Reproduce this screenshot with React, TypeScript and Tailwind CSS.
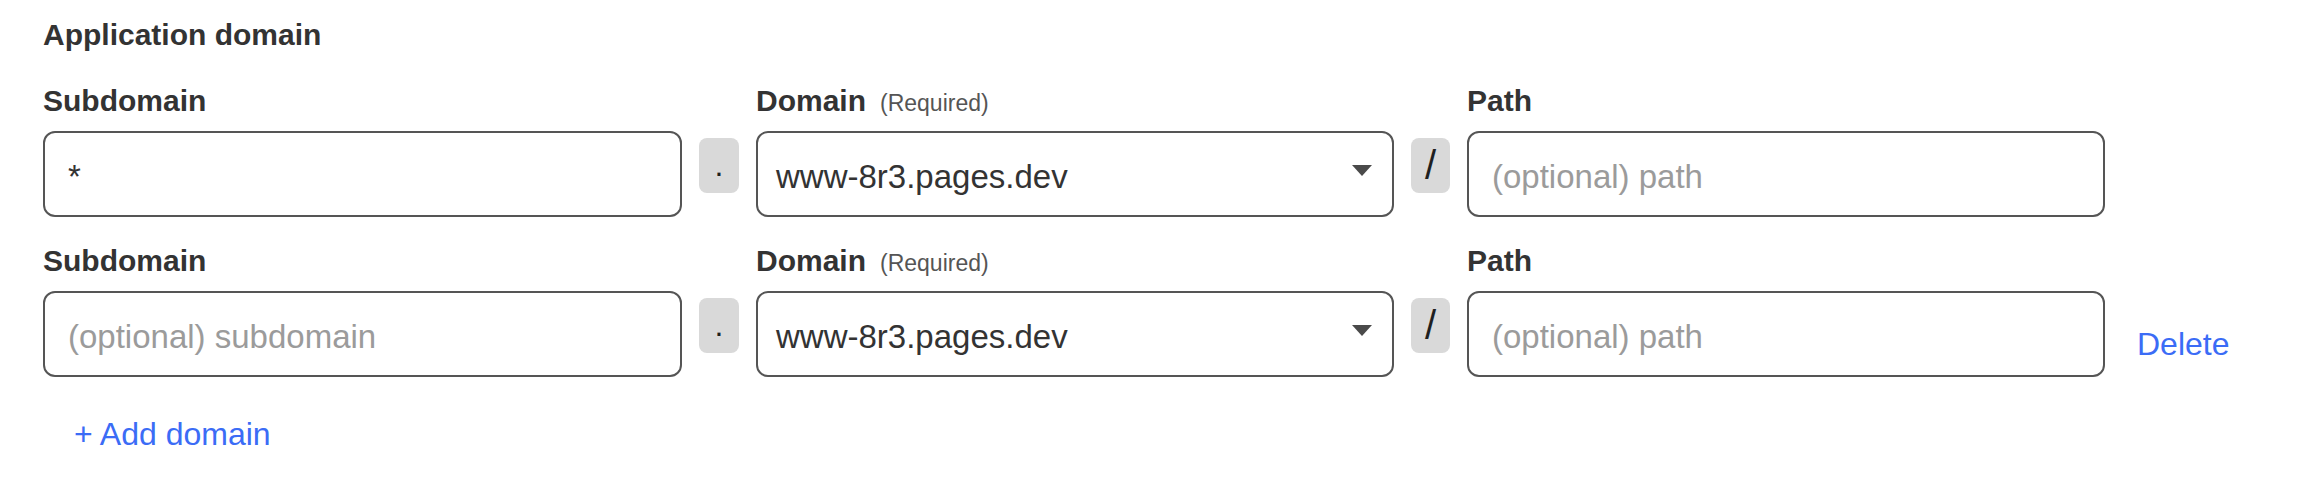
import React from "react";

type Row = { subdomain: string; showDelete: boolean };

const ROWS: Row[] = [
  { subdomain: "*", showDelete: false },
  { subdomain: "", showDelete: true },
];

const Separator = ({ char, big }: { char: string; big?: boolean }) => (
  <div
    className={
      "self-start mt-[7px] w-full h-[55px] rounded-[8px] bg-[#d9d9d9] flex justify-center text-[#1f1f1f] leading-[55px] " +
      (big ? "text-[40px]" : "text-[32px]")
    }
  >
    {char}
  </div>
);

const Label = ({ children }: { children: React.ReactNode }) => (
  <div className="flex items-baseline text-[30px] leading-[36px] font-bold text-[#333333]">{children}</div>
);

const DomainRow = ({ row }: { row: Row }) => (
  <div className="grid grid-cols-[639px_40px_638px_39px_638px_auto] gap-x-[17px] gap-y-[10px]">
    <Label>Subdomain</Label>
    <div />
    <Label>
      Domain
      <span className="ml-[14px] text-[23px] font-normal text-[#555555]">(Required)</span>
    </Label>
    <div />
    <Label>Path</Label>
    <div />

    <input
      defaultValue={row.subdomain}
      placeholder="(optional) subdomain"
      className="h-[86px] w-full rounded-[12px] border-2 border-[#555555] bg-white px-[23px] pt-[5px] text-[33px] text-[#333333] placeholder:text-[#9b9b9b] outline-none"
    />
    <Separator char="." />
    <div className="h-[86px] w-full rounded-[12px] border-2 border-[#555555] bg-white pl-[18px] pr-[20px] flex items-center justify-between text-[33px] text-[#333333]">
      <span className="pt-[5px]">www-8r3.pages.dev</span>
      <svg width="20" height="11" viewBox="0 0 20 11" className="mb-[7px]">
        <polygon points="0,0 20,0 10,11" fill="#4a4a4a" />
      </svg>
    </div>
    <Separator char="/" big />
    <input
      placeholder="(optional) path"
      className="h-[86px] w-full rounded-[12px] border-2 border-[#555555] bg-white px-[23px] pt-[5px] text-[33px] text-[#333333] placeholder:text-[#9b9b9b] outline-none"
    />
    {row.showDelete ? (
      <button className="self-start justify-self-start mt-[35px] ml-[15px] text-[32px] leading-[36px] text-[#3b6cf6]">
        Delete
      </button>
    ) : (
      <div />
    )}
  </div>
);

export default function App() {
  return (
    <div className="h-[478px] w-full bg-white pl-[43px] pt-[17px] font-['Liberation_Sans',Arial,sans-serif]">
      <h2 className="text-[30px] leading-[36px] font-bold text-[#333333]">Application domain</h2>
      <div className="mt-[30px] flex flex-col gap-y-[26px]">
        {ROWS.map((row, i) => (
          <DomainRow key={i} row={row} />
        ))}
      </div>
      <button className="mt-[39px] ml-[31px] text-[32px] leading-[36px] text-[#3b6cf6]">+ Add domain</button>
    </div>
  );
}
